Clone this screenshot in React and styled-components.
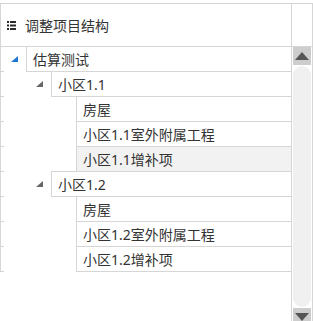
import styled, { createGlobalStyle } from "styled-components";

const GlobalStyle = createGlobalStyle`
  html, body {
    margin: 0;
    padding: 0;
    overflow: hidden;
    background: #ffffff;
  }
  body {
    font-family: "Noto Sans", "Noto Sans CJK SC", sans-serif;
    color: #333333;
  }
`;

const Panel = styled.div`
  margin-top: 3px;
  width: 313px;
  box-sizing: border-box;
  display: flex;
  border-top: 1px solid #d6d6d6;
  border-right: 1px solid #d6d6d6;
`;

const Main = styled.div`
  width: 291px;
  flex-shrink: 0;
`;

const Header = styled.div`
  height: 42px;
  display: flex;
  align-items: center;
  gap: 9px;
  padding-left: 6px;
  border-left: 1px solid #d6d6d6;
  border-bottom: 1px solid #d6d6d6;
  font-size: 14px;
`;

const Tree = styled.div`
  border-left: 1px solid #d6d6d6;
`;

const Row = styled.div`
  display: flex;
  margin-top: -1px;
`;

const Gutter = styled.div`
  width: 3px;
  flex-shrink: 0;
  border-top: 1px solid #d6d6d6;
  border-bottom: 1px solid #d6d6d6;
`;

const Indent = styled.div`
  width: ${(p) => 22 + 25 * p.$level}px;
  flex-shrink: 0;
  box-sizing: border-box;
  padding-left: ${(p) => 7 + 25 * p.$level}px;
  display: flex;
  align-items: center;
`;

const Node = styled.div`
  flex: 1;
  height: 24px;
  display: flex;
  align-items: center;
  padding-left: 6px;
  border-top: 1px solid #d6d6d6;
  border-bottom: 1px solid #d6d6d6;
  border-left: 1px solid #d6d6d6;
  background: ${(p) => (p.$active ? "#f2f2f2" : "#ffffff")};
  font-size: 14px;
  white-space: nowrap;
`;

const Scroll = styled.div`
  width: 20px;
  flex-shrink: 0;
  border-left: 1px solid #d6d6d6;
  display: flex;
  flex-direction: column;
`;

const ScrollTop = styled.div`
  height: 42px;
  border-bottom: 1px solid #d6d6d6;
`;

const ArrowButton = styled.div`
  height: 18px;
  margin: 0 1px;
  background: #cdcdcd;
  display: flex;
  align-items: center;
  justify-content: center;
`;

const Track = styled.div`
  height: 241px;
  margin: 1px 1px;
  background: #f0f0f0;
  border-radius: 9px;
`;

const ListIcon = () => (
  <svg width="9" height="9" viewBox="0 0 9 9">
    <g fill="#2b2b2b">
      <rect x="0" y="0" width="2" height="2" />
      <rect x="3" y="0" width="6" height="2" />
      <rect x="0" y="3.5" width="2" height="2" />
      <rect x="3" y="3.5" width="6" height="2" />
      <rect x="0" y="7" width="2" height="2" />
      <rect x="3" y="7" width="6" height="2" />
    </g>
  </svg>
);

const Toggle = ({ color }) => (
  <svg width="7" height="6" viewBox="0 0 7 6">
    <polygon points="7,0 7,6 0,6" fill={color} />
  </svg>
);

const UpArrow = () => (
  <svg width="14" height="8" viewBox="0 0 14 8">
    <polygon points="7,0 14,8 0,8" fill="#555" />
  </svg>
);

const DownArrow = () => (
  <svg width="14" height="8" viewBox="0 0 14 8">
    <polygon points="0,0 14,0 7,8" fill="#555" />
  </svg>
);

const nodes = [
  { label: "估算测试", level: 0, toggle: "#1e77d0" },
  { label: "小区1.1", level: 1, toggle: "#666" },
  { label: "房屋", level: 2 },
  { label: "小区1.1室外附属工程", level: 2 },
  { label: "小区1.1增补项", level: 2, active: true },
  { label: "小区1.2", level: 1, toggle: "#666" },
  { label: "房屋", level: 2 },
  { label: "小区1.2室外附属工程", level: 2 },
  { label: "小区1.2增补项", level: 2 },
];

const App = () => {
  return (
    <>
      <GlobalStyle />
      <Panel>
        <Main>
          <Header>
            <ListIcon />
            <span>调整项目结构</span>
          </Header>
          <Tree>
            {nodes.map((n, i) => (
              <Row key={i}>
                <Gutter />
                <Indent $level={n.level}>
                  {n.toggle && <Toggle color={n.toggle} />}
                </Indent>
                <Node $active={n.active}>{n.label}</Node>
              </Row>
            ))}
          </Tree>
        </Main>
        <Scroll>
          <ScrollTop />
          <ArrowButton>
            <UpArrow />
          </ArrowButton>
          <Track />
          <ArrowButton>
            <DownArrow />
          </ArrowButton>
        </Scroll>
      </Panel>
    </>
  );
};

export default App;
